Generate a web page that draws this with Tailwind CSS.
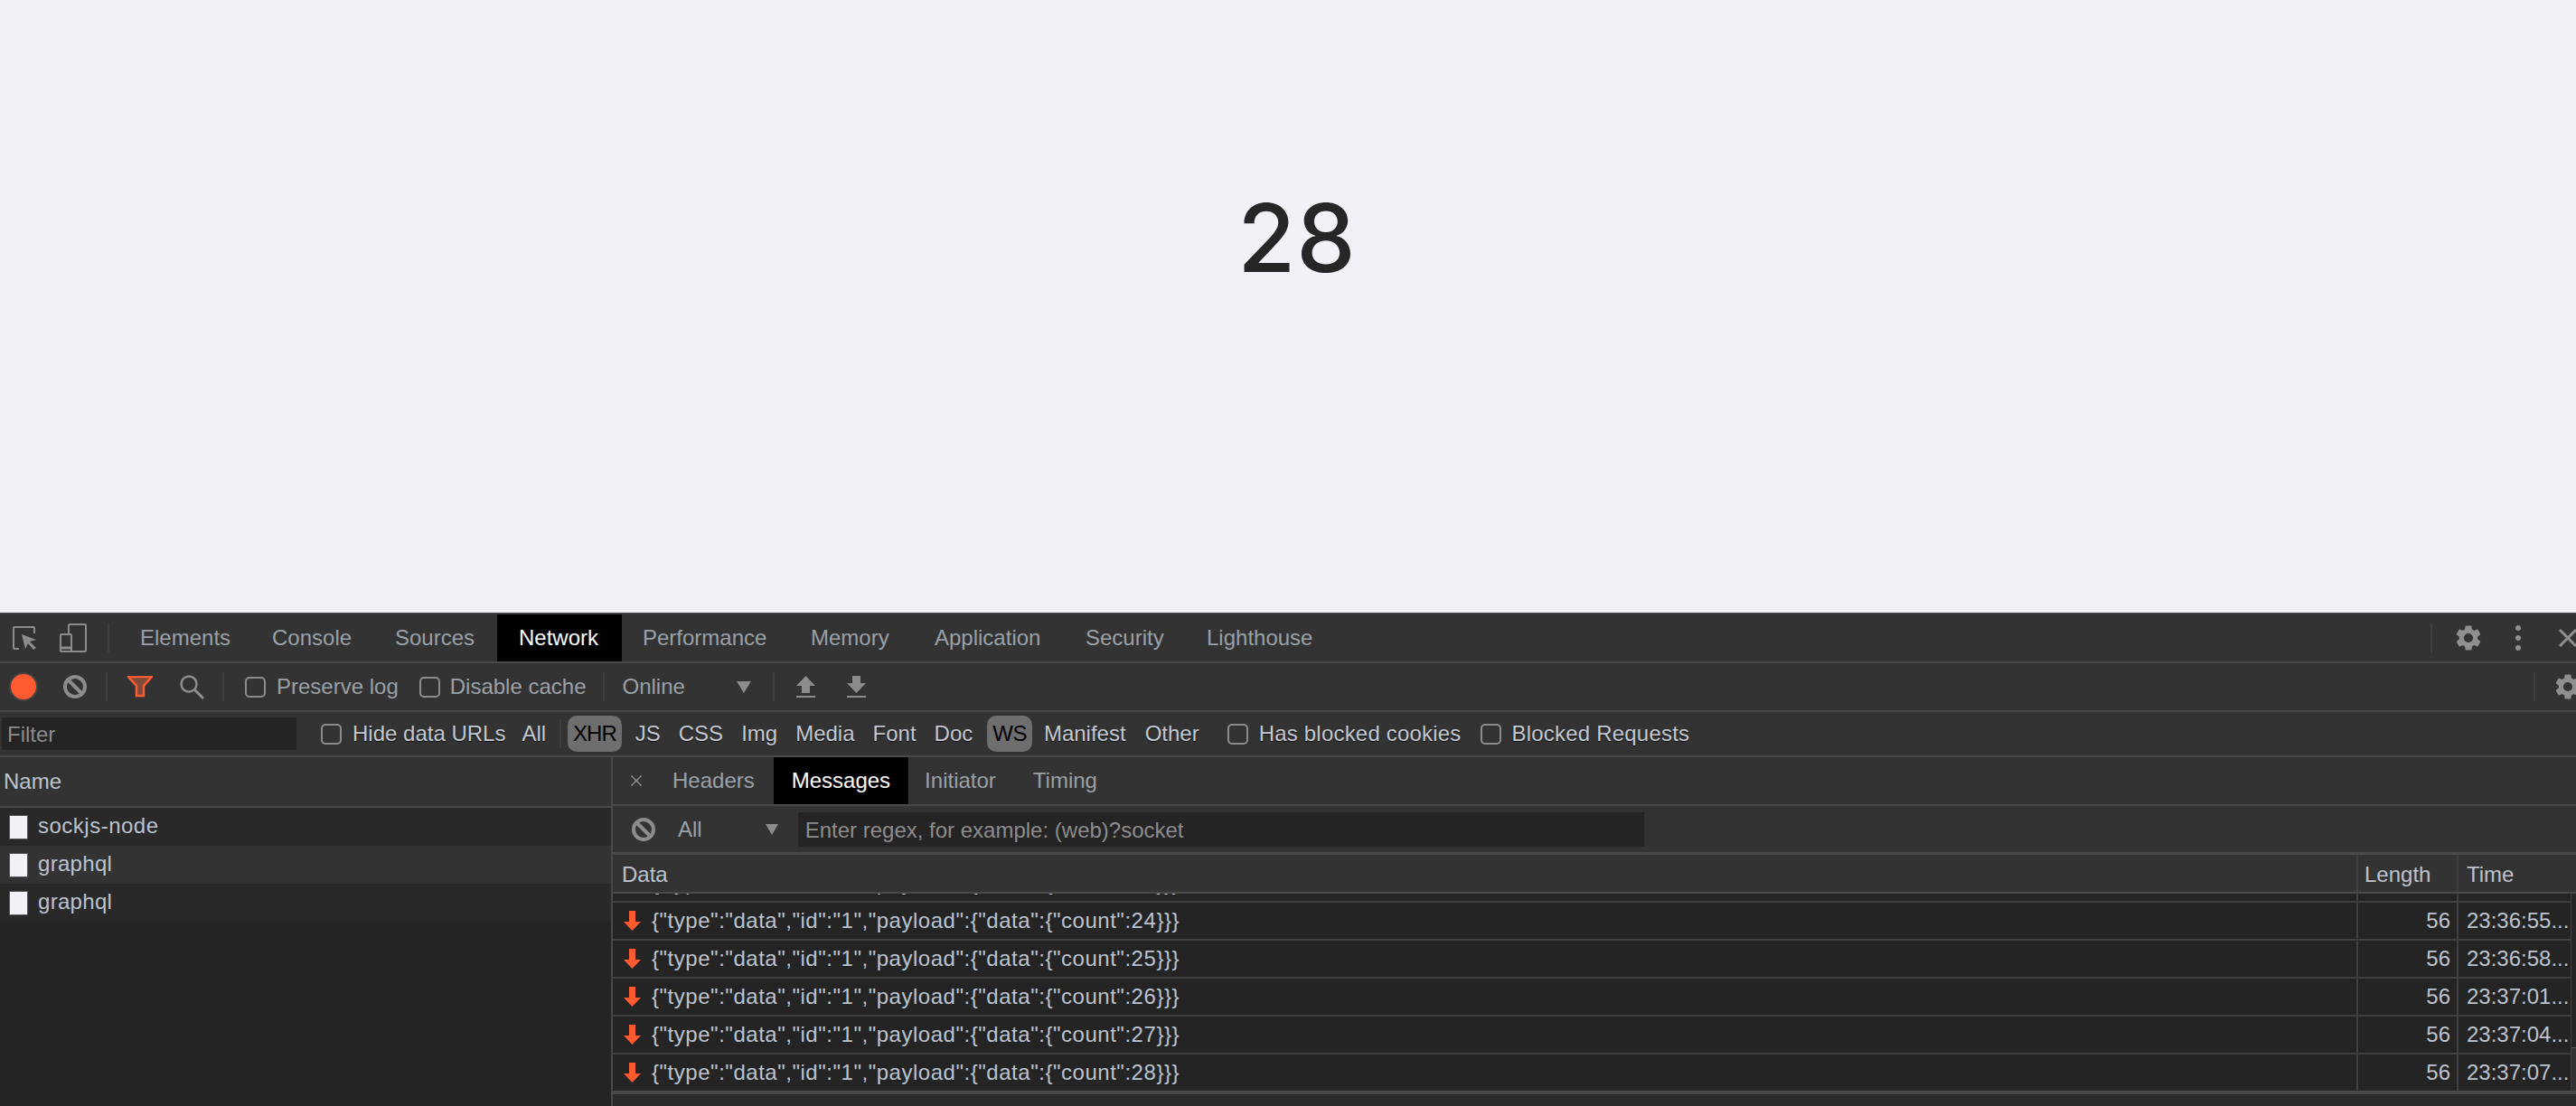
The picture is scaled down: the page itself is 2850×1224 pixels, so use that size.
<!DOCTYPE html>
<html lang="en">
<head>
    <meta charset="UTF-8">
    <title>Subscription counter</title>
    <script src="https://cdn.jsdelivr.net/npm/@tailwindcss/browser@4"></script>
</head>
<body class="w-[2850px] h-[1224px] overflow-hidden flex flex-col bg-[#f0f2f7] [font-family:'Liberation_Sans',sans-serif] text-[24px] leading-none">

    <!-- PAGE -->
    <main class="h-[678px] shrink-0 flex justify-center pl-[20px] pt-[211px]">
        <div class="[font-family:Inter,sans-serif] font-medium [font-variation-settings:'opsz'_14] text-[104px] tracking-[1px] leading-[104px] text-[#262626]">28</div>
    </main>

    <!-- DEVTOOLS -->
    <section class="flex-1 flex flex-col bg-[#333333] border-t-2 border-[#3f3f3f] text-[#9aa0a6] overflow-hidden">

        <!-- main tabs -->
        <div class="h-[54px] shrink-0 flex items-center border-b-2 border-[#494949]">
            <svg class="ml-[14px] w-[26px] h-[26px]" viewBox="0 0 26 26" fill="none" stroke="#8c8c8c" stroke-width="2"><path d="M7 25H2a1 1 0 0 1-1-1V2a1 1 0 0 1 1-1h21a1 1 0 0 1 1 1v6"/><path d="M10 9l16 6-7 2 7 7-3 2-6-7-3 6z" fill="#8c8c8c" stroke="none"/></svg>
            <svg class="ml-[26px] w-[30px] h-[32px]" viewBox="0 0 30 32" fill="none" stroke="#8c8c8c" stroke-width="2"><path d="M10 11V2a1 1 0 0 1 1-1h17a1 1 0 0 1 1 1v28a1 1 0 0 1-1 1H2a1 1 0 0 1-1-1V13a1 1 0 0 1 1-1h10a1 1 0 0 1 1 1v18"/><path d="M1 27h12" stroke-width="3"/></svg>
            <div class="ml-[23px] w-[2px] h-[32px] bg-[#3f3f3f]"></div>
            <div class="ml-[10px] h-full flex">
                <div class="w-[146px] pl-[24px] flex items-center">Elements</div>
                <div class="w-[136px] pl-[24px] flex items-center">Console</div>
                <div class="w-[137px] pl-[24px] flex items-center">Sources</div>
                <div class="w-[138px] pl-[24px] flex items-center bg-black text-white">Network</div>
                <div class="w-[185px] pl-[23px] flex items-center">Performance</div>
                <div class="w-[137px] pl-[24px] flex items-center">Memory</div>
                <div class="w-[167px] pl-[24px] flex items-center">Application</div>
                <div class="w-[134px] pl-[24px] flex items-center">Security</div>
                <div class="pl-[24px] flex items-center">Lighthouse</div>
            </div>
            <div class="ml-auto w-[2px] h-[32px] bg-[#3f3f3f]"></div>
            <svg class="ml-[23px] w-[34px] h-[34px] shrink-0" viewBox="0 0 24 24" fill="#8f8f8f"><path d="M19.14 12.94c.04-.3.06-.61.06-.94s-.02-.64-.07-.94l2.03-1.58a.5.5 0 0 0 .12-.61l-1.92-3.32a.5.5 0 0 0-.59-.22l-2.39.96a7 7 0 0 0-1.62-.94l-.36-2.54a.48.48 0 0 0-.48-.41h-3.84a.48.48 0 0 0-.47.41l-.36 2.54c-.59.24-1.13.57-1.62.94l-2.39-.96a.49.49 0 0 0-.59.22L2.74 8.87a.48.48 0 0 0 .12.61l2.03 1.58c-.05.3-.07.62-.07.94s.02.64.07.94l-2.03 1.58a.5.5 0 0 0-.12.61l1.92 3.32c.12.22.37.29.59.22l2.39-.96c.5.38 1.03.7 1.62.94l.36 2.54c.05.24.24.41.48.41h3.84c.24 0 .44-.17.47-.41l.36-2.54c.59-.24 1.13-.56 1.62-.94l2.39.96c.22.08.47 0 .59-.22l1.92-3.32a.48.48 0 0 0-.12-.61zM12 15.6A3.6 3.6 0 1 1 12 8.4a3.6 3.6 0 0 1 0 7.2z"/></svg>
            <div class="ml-[35px] w-[6px] flex flex-col gap-[5px] shrink-0">
                <span class="w-[6px] h-[6px] rounded-full bg-[#8f8f8f]"></span>
                <span class="w-[6px] h-[6px] rounded-full bg-[#8f8f8f]"></span>
                <span class="w-[6px] h-[6px] rounded-full bg-[#8f8f8f]"></span>
            </div>
            <svg class="ml-[42px] mr-[-1px] w-[20px] h-[20px] shrink-0" viewBox="0 0 20 20" stroke="#8f8f8f" stroke-width="3"><path d="M1 1l18 18M19 1L1 19"/></svg>
        </div>

        <!-- network toolbar -->
        <div class="h-[54px] shrink-0 flex items-center border-b-2 border-[#494949]">
            <div class="ml-[12px] w-[28px] h-[28px] rounded-full bg-[#ff5a30] ring-2 ring-[#444444]"></div>
            <svg class="ml-[30px] w-[26px] h-[26px]" viewBox="0 0 26 26" fill="none" stroke="#8c8c8c" stroke-width="4"><circle cx="13" cy="13" r="11"/><path d="M5 5l16 16"/></svg>
            <div class="ml-[21px] w-[2px] h-[32px] bg-[#3f3f3f]"></div>
            <svg class="ml-[22px] w-[28px] h-[24px]" viewBox="0 0 28 24"><path d="M1 1h26L18 11v11h-8V11z" fill="#7f4a3a" stroke="#ff5a30" stroke-width="2.5"/></svg>
            <svg class="ml-[29px] w-[28px] h-[28px]" viewBox="0 0 28 28" fill="none" stroke="#8c8c8c" stroke-width="2.5"><circle cx="11" cy="11" r="8.5"/><path d="M17 17l10 10" stroke-width="3"/></svg>
            <div class="ml-[20px] w-[2px] h-[32px] bg-[#3f3f3f]"></div>
            <span class="ml-[23px] w-[23px] h-[23px] rounded-[5px] border-2 border-[#8c8c8c]"></span>
            <span class="ml-[12px]">Preserve log</span>
            <span class="ml-[23px] w-[23px] h-[23px] rounded-[5px] border-2 border-[#8c8c8c]"></span>
            <span class="ml-[11px]">Disable cache</span>
            <div class="ml-[19px] w-[2px] h-[32px] bg-[#3f3f3f]"></div>
            <span class="ml-[19px]">Online</span>
            <svg class="ml-[57px] w-[16px] h-[13px]" viewBox="0 0 16 13" fill="#8c8c8c"><path d="M0 0h16L8 13z"/></svg>
            <div class="ml-[24px] w-[2px] h-[32px] bg-[#3f3f3f]"></div>
            <svg class="ml-[24px] w-[21px] h-[24px]" viewBox="0 0 21 24" fill="#8c8c8c"><path d="M10.5 0L21 11h-6v8H6v-8H0zM0 22h21v2H0z"/></svg>
            <svg class="ml-[35px] w-[21px] h-[24px]" viewBox="0 0 21 24" fill="#8c8c8c"><path d="M6 0h9v8h6L10.500 19 0 8h6zM0 22h21v2H0z"/></svg>
            <div class="ml-auto w-[2px] h-[32px] bg-[#3f3f3f]"></div>
            <svg class="ml-[19px] mr-[-8px] w-[34px] h-[34px] shrink-0" viewBox="0 0 24 24" fill="#8f8f8f"><path d="M19.14 12.94c.04-.3.06-.61.06-.94s-.02-.64-.07-.94l2.03-1.58a.5.5 0 0 0 .12-.61l-1.92-3.32a.5.5 0 0 0-.59-.22l-2.39.96a7 7 0 0 0-1.62-.94l-.36-2.54a.48.48 0 0 0-.48-.41h-3.84a.48.48 0 0 0-.47.41l-.36 2.54c-.59.24-1.13.57-1.62.94l-2.39-.96a.49.49 0 0 0-.59.22L2.74 8.87a.48.48 0 0 0 .12.61l2.03 1.58c-.05.3-.07.62-.07.94s.02.64.07.94l-2.03 1.58a.5.5 0 0 0-.12.61l1.92 3.32c.12.22.37.29.59.22l2.39-.96c.5.38 1.03.7 1.62.94l.36 2.54c.05.24.24.41.48.41h3.84c.24 0 .44-.17.47-.41l.36-2.54c.59-.24 1.13-.56 1.62-.94l2.39.96c.22.08.47 0 .59-.22l1.92-3.32a.48.48 0 0 0-.12-.61zM12 15.6A3.6 3.6 0 1 1 12 8.4a3.6 3.6 0 0 1 0 7.2z"/></svg>
        </div>

        <!-- filter bar -->
        <div class="h-[50px] shrink-0 flex items-center border-b-2 border-[#494949] text-[#c4c8d0] [text-shadow:0_1px_1px_#111111]">
            <input class="ml-[2px] w-[326px] h-[36px] px-[6px] pt-[2px] bg-[#242424] outline-none placeholder:text-[#8c8c8c] text-[24px]" placeholder="Filter">
            <span class="ml-[27px] w-[23px] h-[23px] rounded-[5px] border-2 border-[#8c8c8c]"></span>
            <span class="ml-[12px]">Hide data URLs</span>
            <span class="ml-[18px]">All</span>
            <div class="ml-[15px] w-[2px] h-[32px] bg-[#3f3f3f]"></div>
            <span class="ml-[7px] h-[40px] px-[6px] flex items-center rounded-[10px] bg-[#6e6e6e] text-black tracking-[-1px] [text-shadow:none]">XHR</span>
            <span class="ml-[15px]">JS</span>
            <span class="ml-[20px]">CSS</span>
            <span class="ml-[20px]">Img</span>
            <span class="ml-[20px]">Media</span>
            <span class="ml-[20px]">Font</span>
            <span class="ml-[20px]">Doc</span>
            <span class="ml-[16px] h-[40px] px-[6px] flex items-center rounded-[10px] bg-[#6e6e6e] text-black tracking-[-0.5px] [text-shadow:none]">WS</span>
            <span class="ml-[13px]">Manifest</span>
            <span class="ml-[21px]">Other</span>
            <span class="ml-[31px] w-[23px] h-[23px] rounded-[5px] border-2 border-[#8c8c8c]"></span>
            <span class="ml-[12px] tracking-[0.2px]">Has blocked cookies</span>
            <span class="ml-[21px] w-[23px] h-[23px] rounded-[5px] border-2 border-[#8c8c8c]"></span>
            <span class="ml-[12px] tracking-[0.2px]">Blocked Requests</span>
        </div>

        <!-- split panes -->
        <div class="flex-1 flex min-h-0">

            <!-- request list -->
            <aside class="w-[678px] shrink-0 flex flex-col bg-[#242424] border-r-2 border-[#494949] text-[#bcc3ce]">
                <div class="h-[56px] shrink-0 flex items-center pl-[4px] bg-[#333333] border-b-2 border-[#494949]">Name</div>
                <div class="h-[42px] flex items-center bg-[#292929] tracking-[0.5px]">
                    <span class="ml-[10px] w-[21px] h-[27px] bg-[#f0f2f7] border border-[#555555]"></span>
                    <span class="ml-[11px] mb-[2px]">sockjs-node</span>
                </div>
                <div class="h-[42px] flex items-center bg-[#333333] tracking-[0.3px]">
                    <span class="ml-[10px] w-[21px] h-[27px] bg-[#f0f2f7] border border-[#555555]"></span>
                    <span class="ml-[11px] mb-[2px]">graphql</span>
                </div>
                <div class="h-[42px] flex items-center bg-[#292929] tracking-[0.3px]">
                    <span class="ml-[10px] w-[21px] h-[27px] bg-[#f0f2f7] border border-[#555555]"></span>
                    <span class="ml-[11px] mb-[2px]">graphql</span>
                </div>
            </aside>

            <!-- request detail -->
            <div class="flex-1 flex flex-col min-w-0">
                <div class="h-[54px] shrink-0 flex items-center border-b-2 border-[#494949]">
                    <svg class="ml-[20px] w-[12px] h-[12px]" viewBox="0 0 12 12" stroke="#8c8c8c" stroke-width="1.500"><path d="M0 0l12 12M12 0L0 12"/></svg>
                    <span class="ml-[34px]">Headers</span>
                    <div class="ml-[21px] h-full px-[20px] flex items-center bg-black text-white">Messages</div>
                    <span class="ml-[18px]">Initiator</span>
                    <span class="ml-[41px]">Timing</span>
                </div>
                <div class="h-[54px] shrink-0 flex items-center border-b-[3px] border-[#494949] text-[#9aa0a6]">
                    <svg class="ml-[21px] w-[26px] h-[26px]" viewBox="0 0 26 26" fill="none" stroke="#8c8c8c" stroke-width="4"><circle cx="13" cy="13" r="11"/><path d="M5 5l16 16"/></svg>
                    <span class="ml-[25px]">All</span>
                    <svg class="ml-[70px] w-[14px] h-[12px]" viewBox="0 0 14 12" fill="#8c8c8c"><path d="M0 0h14L7 12z"/></svg>
                    <input class="ml-[22px] w-[936px] h-[38px] px-[8px] pt-[2px] bg-[#242424] outline-none placeholder:text-[#8c8c8c] text-[24px]" placeholder="Enter regex, for example: (web)?socket">
                </div>

                <!-- messages table -->
                <div class="h-[43px] shrink-0 flex text-[#bcc3ce] border-b-2 border-[#494949]">
                    <div class="w-[1931px] pl-[10px] pt-[2px] flex items-center border-r-2 border-[#3f3f3f]">Data</div>
                    <div class="w-[111px] pl-[7px] pt-[2px] flex items-center border-r-2 border-[#3f3f3f]">Length</div>
                    <div class="pl-[9px] pt-[2px] flex items-center">Time</div>
                </div>
                <div class="h-[218px] shrink-0 flex text-[#bcc3ce] bg-[#242424]">
                    <div class="flex-1 min-w-0 flex flex-col">
                        <div class="h-[10px] shrink-0 flex flex-col justify-end overflow-hidden border-b-2 border-[#3f3f3f]">
                            <div class="h-[40px] shrink-0 flex">
                                <div class="w-[1931px] flex items-center pl-[43px] tracking-[0.53px] border-r-2 border-[#3f3f3f]">{"type":"data","id":"1","payload":{"data":{"count":23}}}</div>
                                <div class="w-[111px] border-r-2 border-[#3f3f3f]"></div>
                            </div>
                        </div>
                        <div class="h-[42px] shrink-0 flex border-b-2 border-[#3f3f3f]">
                            <div class="w-[1931px] flex items-center pl-[12px] border-r-2 border-[#3f3f3f]">
                                <svg class="w-[19px] h-[22px]" viewBox="0 0 19 22" fill="#ff5a30"><path d="M6 0h7v12h6l-9.500 10L0 12h6z"/></svg>
                                <span class="ml-[12px] tracking-[0.53px]">{"type":"data","id":"1","payload":{"data":{"count":24}}}</span>
                            </div>
                            <div class="w-[111px] flex items-center justify-end pr-[7px] border-r-2 border-[#3f3f3f]">56</div>
                            <div class="flex-1 min-w-0 pl-[9px] flex items-center whitespace-nowrap">23:36:55...</div>
                        </div>
                        <div class="h-[42px] shrink-0 flex border-b-2 border-[#3f3f3f]">
                            <div class="w-[1931px] flex items-center pl-[12px] border-r-2 border-[#3f3f3f]">
                                <svg class="w-[19px] h-[22px]" viewBox="0 0 19 22" fill="#ff5a30"><path d="M6 0h7v12h6l-9.500 10L0 12h6z"/></svg>
                                <span class="ml-[12px] tracking-[0.53px]">{"type":"data","id":"1","payload":{"data":{"count":25}}}</span>
                            </div>
                            <div class="w-[111px] flex items-center justify-end pr-[7px] border-r-2 border-[#3f3f3f]">56</div>
                            <div class="flex-1 min-w-0 pl-[9px] flex items-center whitespace-nowrap">23:36:58...</div>
                        </div>
                        <div class="h-[42px] shrink-0 flex border-b-2 border-[#3f3f3f]">
                            <div class="w-[1931px] flex items-center pl-[12px] border-r-2 border-[#3f3f3f]">
                                <svg class="w-[19px] h-[22px]" viewBox="0 0 19 22" fill="#ff5a30"><path d="M6 0h7v12h6l-9.500 10L0 12h6z"/></svg>
                                <span class="ml-[12px] tracking-[0.53px]">{"type":"data","id":"1","payload":{"data":{"count":26}}}</span>
                            </div>
                            <div class="w-[111px] flex items-center justify-end pr-[7px] border-r-2 border-[#3f3f3f]">56</div>
                            <div class="flex-1 min-w-0 pl-[9px] flex items-center whitespace-nowrap">23:37:01...</div>
                        </div>
                        <div class="h-[42px] shrink-0 flex border-b-2 border-[#3f3f3f]">
                            <div class="w-[1931px] flex items-center pl-[12px] border-r-2 border-[#3f3f3f]">
                                <svg class="w-[19px] h-[22px]" viewBox="0 0 19 22" fill="#ff5a30"><path d="M6 0h7v12h6l-9.500 10L0 12h6z"/></svg>
                                <span class="ml-[12px] tracking-[0.53px]">{"type":"data","id":"1","payload":{"data":{"count":27}}}</span>
                            </div>
                            <div class="w-[111px] flex items-center justify-end pr-[7px] border-r-2 border-[#3f3f3f]">56</div>
                            <div class="flex-1 min-w-0 pl-[9px] flex items-center whitespace-nowrap">23:37:04...</div>
                        </div>
                        <div class="h-[40px] shrink-0 flex">
                            <div class="w-[1931px] flex items-center pl-[12px] border-r-2 border-[#3f3f3f]">
                                <svg class="w-[19px] h-[22px]" viewBox="0 0 19 22" fill="#ff5a30"><path d="M6 0h7v12h6l-9.500 10L0 12h6z"/></svg>
                                <span class="ml-[12px] tracking-[0.53px]">{"type":"data","id":"1","payload":{"data":{"count":28}}}</span>
                            </div>
                            <div class="w-[111px] flex items-center justify-end pr-[7px] border-r-2 border-[#3f3f3f]">56</div>
                            <div class="flex-1 min-w-0 pl-[9px] flex items-center whitespace-nowrap">23:37:07...</div>
                        </div>
                    </div>
                    <!-- scrollbar -->
                    <div class="w-[6px] shrink-0 flex flex-col justify-end border-l border-[#3f3f3f] bg-[#262626]">
                        <div class="h-[48px] bg-[#333333] border-t border-[#555555]"></div>
                    </div>
                </div>
                <div class="h-[4px] shrink-0 bg-[#494949]"></div>
                <div class="flex-1 bg-[#2a2a2a]"></div>
            </div>
        </div>
    </section>
</body>
</html>
